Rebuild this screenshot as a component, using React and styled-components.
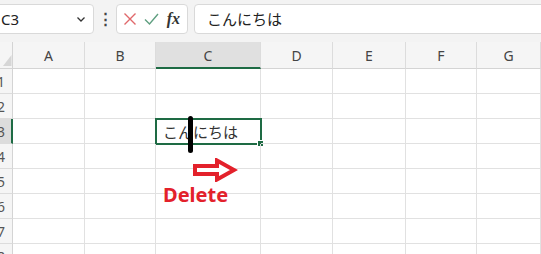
import React from "react";
import styled, { createGlobalStyle } from "styled-components";

const GlobalStyle = createGlobalStyle`
  body {
    margin: 0;
    background: #ffffff;
    font-family: "Noto Sans", "Noto Sans CJK JP", sans-serif;
    overflow: hidden;
  }
`;

const Page = styled.div`
  width: 541px;
  height: 254px;
  overflow: hidden;
  background: #ffffff;
`;

const Toolbar = styled.div`
  display: flex;
  align-items: center;
  height: 42px;
  padding-bottom: 5px;
  box-sizing: border-box;
  background: #f3f3f3;
`;

const NameBox = styled.div`
  display: flex;
  align-items: center;
  justify-content: space-between;
  width: 98px;
  height: 30px;
  margin-left: -4px;
  padding: 0 7px 0 4px;
  box-sizing: border-box;
  background: #fff;
  border: 1px solid #d9d9d9;
  border-radius: 4px;
  font-size: 15px;
  color: #222;
`;

const Dots = styled.div`
  width: 22px;
  text-align: center;
  font-size: 15px;
  font-weight: 700;
  color: #444;
  line-height: 1;
`;

const IconBox = styled.div`
  display: flex;
  align-items: center;
  justify-content: space-between;
  width: 72px;
  height: 30px;
  padding: 0 6px 0 6px;
  box-sizing: border-box;
  background: #fff;
  border: 1px solid #d9d9d9;
  border-radius: 4px;
`;

const Fx = styled.span`
  font-family: "Liberation Serif", "DejaVu Serif", serif;
  font-style: italic;
  font-weight: 700;
  font-size: 16px;
  color: #333;
  padding-right: 1px;
`;

const FormulaInput = styled.div`
  flex: 1;
  display: flex;
  align-items: center;
  height: 30px;
  margin-left: 6px;
  margin-right: -4px;
  padding-left: 12px;
  box-sizing: border-box;
  background: #fff;
  border: 1px solid #d9d9d9;
  border-radius: 4px;
  font-family: "Noto Sans CJK JP", sans-serif;
  font-size: 15px;
  color: #222;
`;

const Sheet = styled.div`
  position: relative;
  display: grid;
  grid-template-columns: 13px 72px 71px 105px 72px 73px 71px 1fr;
  grid-template-rows: 27px repeat(8, 25px);
`;

const Corner = styled.div`
  position: relative;
  background: #f5f5f5;
  border-right: 1px solid #d4d4d4;
  border-bottom: 1px solid #d4d4d4;
  box-sizing: border-box;
  overflow: hidden;
`;

const ColHead = styled.div`
  display: flex;
  align-items: center;
  justify-content: center;
  box-sizing: border-box;
  background: ${(p) => (p.$active ? "#e0e0e0" : "#f5f5f5")};
  border-right: 1px solid #dcdcdc;
  border-bottom: ${(p) => (p.$active ? "2px solid #1e6b44" : "1px solid #d4d4d4")};
  font-size: 14px;
  color: #444;
  padding-top: 1px;
`;

const RowHead = styled.div`
  display: flex;
  align-items: center;
  box-sizing: border-box;
  overflow: hidden;
  background: ${(p) => (p.$active ? "#dcdcdc" : "#f5f5f5")};
  border-right: ${(p) => (p.$active ? "2px solid #1e6b44" : "1px solid #d4d4d4")};
  border-bottom: 1px solid #dcdcdc;
  font-size: 14px;
  color: #555;
  span {
    flex: none;
    width: 30px;
    margin-left: -14px;
    text-align: center;
  }
`;

const Cell = styled.div`
  position: relative;
  box-sizing: border-box;
  border-right: 1px solid #e1e1e1;
  border-bottom: 1px solid #e1e1e1;
  display: flex;
  align-items: center;
  padding-left: 7px;
  font-family: "Noto Sans CJK JP", sans-serif;
  font-size: 15px;
  color: #333;
  ${(p) =>
    p.$selected &&
    `
    outline: 2px solid #1e6b44;
    outline-offset: -1px;
    &::after {
      content: "";
      position: absolute;
      right: -4px;
      bottom: -4px;
      width: 5px;
      height: 5px;
      background: #1e6b44;
      border: 1px solid #fff;
    }
  `}
`;

const Cursor = styled.div`
  position: absolute;
  left: 188px;
  top: 74px;
  width: 5px;
  height: 37px;
  border-radius: 3px;
  background: #000;
`;

const Arrow = styled.svg`
  position: absolute;
  left: 192px;
  top: 116px;
`;

const DeleteLabel = styled.div`
  position: absolute;
  left: 163px;
  top: 143px;
  font-family: "Noto Sans", sans-serif;
  font-weight: 700;
  font-size: 20px;
  line-height: 1;
  color: #e3212b;
`;

const cols = ["A", "B", "C", "D", "E", "F", "G"];
const rows = [1, 2, 3, 4, 5, 6, 7, 8];

export default function App() {
  return (
    <Page>
      <GlobalStyle />
      <Toolbar>
        <NameBox>
          <span>C3</span>
          <svg width="10" height="8" viewBox="0 0 10 8">
            <path d="M1.5 2.5 L5 6 L8.5 2.5" fill="none" stroke="#333" strokeWidth="1.3" />
          </svg>
        </NameBox>
        <Dots>⋮</Dots>
        <IconBox>
          <svg width="14" height="14" viewBox="0 0 14 14">
            <path d="M1.5 1.5 L12.5 12.5 M12.5 1.5 L1.5 12.5" stroke="#e0686b" strokeWidth="1.4" />
          </svg>
          <svg width="15" height="14" viewBox="0 0 15 14">
            <path d="M1 7.5 L5.5 12 L14 2" fill="none" stroke="#5f9f80" strokeWidth="1.4" />
          </svg>
          <Fx>fx</Fx>
        </IconBox>
        <FormulaInput>こんにちは</FormulaInput>
      </Toolbar>
      <Sheet>
        <Corner>
          <svg width="13" height="27" viewBox="0 0 13 27" style={{ position: "absolute", left: 0, top: 0 }}>
            <path d="M3 24 L11.5 24 L11.5 13 Z" fill="#d6d6d6" />
          </svg>
        </Corner>
        {cols.map((c) => (
          <ColHead key={c} $active={c === "C"}>
            {c}
          </ColHead>
        ))}
        {rows.map((r) => (
          <React.Fragment key={r}>
            <RowHead $active={r === 3}>
              <span>{r}</span>
            </RowHead>
            {cols.map((c) => (
              <Cell key={c} $selected={r === 3 && c === "C"}>
                {r === 3 && c === "C" ? "こんにちは" : ""}
              </Cell>
            ))}
          </React.Fragment>
        ))}
        <Cursor />
        <Arrow width="46" height="24" viewBox="0 0 46 24">
          <path
            d="M3 8 L25 8 L25 2.5 L42 12 L25 21.5 L25 16 L3 16 Z"
            fill="#fff"
            stroke="#e3212b"
            strokeWidth="4"
            strokeLinejoin="miter"
          />
        </Arrow>
        <DeleteLabel>Delete</DeleteLabel>
      </Sheet>
    </Page>
  );
}
